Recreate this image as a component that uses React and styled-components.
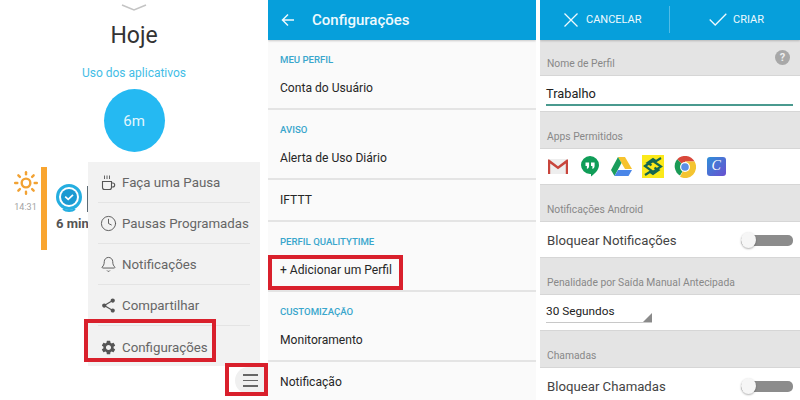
import React from 'react';
import styled, { createGlobalStyle } from 'styled-components';
import { Bell, Clock, Sun } from 'lucide-react';
import { MdSettings, MdShare } from 'react-icons/md';

const GlobalStyle = createGlobalStyle`
  html, body { margin: 0; padding: 0; background: #fff; }
  body { font-family: Roboto, "Noto Sans", sans-serif; }
  * { box-sizing: border-box; }
`;

const Page = styled.div`
  width: 800px;
  height: 400px;
  overflow: hidden;
  display: grid;
  grid-template-columns: 268px 268px 264px;
  background: #fff;
`;

const Screen = styled.section`
  position: relative;
  height: 400px;
  overflow: hidden;
  background: ${p => p.$bg || '#fff'};
  display: flex;
  flex-direction: column;
  &:last-child { margin-left: 4px; }
`;

/* ---- first screen ---- */
const Chevron = styled.svg`
  display: block;
  flex: none;
  align-self: center;
  margin-top: 4px;
  width: 26px;
  height: 8px;
`;

const Today = styled.h1`
  margin: 8px 0 0;
  height: 32px;
  line-height: 32px;
  font-size: 23px;
  font-weight: 400;
  color: #333;
  text-align: center;
`;

const UsageLabel = styled.div`
  margin-top: 13px;
  height: 16px;
  line-height: 16px;
  font-size: 12px;
  color: #43bde6;
  text-align: center;
`;

const UsageBubble = styled.div`
  align-self: center;
  flex: none;
  margin-top: 8px;
  width: 61px;
  height: 63px;
  border-radius: 50%;
  background: #25b9f2;
  color: #e3f6fd;
  font-size: 15px;
  display: flex;
  align-items: center;
  justify-content: center;
`;

const Timeline = styled.div`
  margin-top: 15px;
  height: 83px;
  display: flex;
`;

const TimeColumn = styled.div`
  width: 41px;
  padding: 3px 0 0 10px;
  display: flex;
  flex-direction: column;
  align-items: center;
  color: #f2a233;
`;

const TimeText = styled.span`
  margin-top: 6px;
  font-size: 9px;
  color: #a3a3a3;
`;

const OrangeBar = styled.div`
  width: 6px;
  height: 83px;
  background: #f9a530;
`;

const Entry = styled.div`
  margin-left: 9px;
  padding-top: 17px;
`;

const EntryTop = styled.div`
  display: flex;
  gap: 5px;
  align-items: flex-start;
`;

const EntryLine = styled.div`
  width: 1px;
  height: 26px;
  margin-top: 2px;
  background: #5d6b74;
`;

const EntryTime = styled.div`
  margin-top: 3px;
  font-size: 13px;
  font-weight: 700;
  color: #555;
  white-space: nowrap;
`;

const Menu = styled.nav`
  position: absolute;
  left: 88px;
  top: 162px;
  width: 172px;
  height: 204px;
  background: #f2f2f2;
`;

const MenuItem = styled.div`
  height: 41px;
  margin: 0 10px;
  padding: 1px 0 0 2px;
  display: flex;
  align-items: center;
  gap: 5px;
  font-size: 13.3px;
  color: #666;
  white-space: nowrap;
  border-bottom: ${p => (p.$last ? 'none' : '1px solid #e4e4e4')};
  svg { flex: none; width: 17px; height: 17px; color: #555; }
`;

const Fab = styled.div`
  position: absolute;
  left: 235px;
  top: 367px;
  width: 33px;
  height: 27px;
  border-radius: 14px 0 0 14px;
  background: #f0f0f0;
  display: flex;
  flex-direction: column;
  justify-content: center;
  gap: 4px;
  padding-left: 8px;
`;

const FabLine = styled.span`
  display: block;
  width: 15px;
  height: 1.5px;
  background: #666;
`;

const Highlight = styled.div`
  position: absolute;
  border: 4px solid #d9202c;
  pointer-events: none;
`;

const ConfigHighlight = styled(Highlight)`
  left: 84px;
  top: 319px;
  width: 132px;
  height: 43px;
`;

const FabHighlight = styled(Highlight)`
  left: 225px;
  top: 363px;
  width: 43px;
  height: 33px;
`;

const ProfileHighlight = styled(Highlight)`
  left: 0;
  top: 255px;
  width: 135px;
  height: 35px;
`;

/* ---- second screen ---- */
const AppBar = styled.header`
  flex: none;
  height: 40px;
  padding-bottom: 1px;
  background: #069fdb;
  color: #eef9fd;
  display: flex;
  align-items: center;
  box-shadow: 0 1px 2px rgba(0, 0, 0, 0.2);
  position: relative;
  z-index: 1;
`;

const BackArrow = styled.svg`
  width: 14px;
  height: 14px;
  margin-left: 13px;
`;

const AppTitle = styled.h2`
  margin: 0 0 0 17px;
  font-size: 15px;
  font-weight: 500;
`;

const SettingsBody = styled.div`
  flex: 1;
  background: #fafafa;
`;

const SectionLabel = styled.div`
  height: 28px;
  padding: 11px 12px 0;
  line-height: 18px;
  font-size: 9.6px;
  font-weight: 500;
  color: #39a6cc;
`;

const SettingRow = styled.div`
  height: 42px;
  padding: 0 12px;
  border-bottom: 2px solid #e4e4e4;
  display: flex;
  align-items: center;
  font-size: 12.1px;
  color: #262626;
`;

/* ---- third screen ---- */
const Action = styled.div`
  display: flex;
  align-items: center;
  width: ${p => p.$w}px;
  padding-left: ${p => p.$pad}px;
  gap: ${p => p.$gap}px;
  font-size: 11px;
  svg { flex: none; }
`;

const ActionDivider = styled.div`
  width: 1px;
  height: 27px;
  background: rgba(255, 255, 255, 0.3);
`;

const ProfileForm = styled.div`
  flex: 1;
  background: #e4e4e4;
`;

const Band = styled.div`
  height: ${p => p.$h || 36}px;
  padding: 0 10px 5px 7px;
  display: flex;
  align-items: flex-end;
  justify-content: space-between;
  font-size: 10.3px;
  line-height: 12px;
  color: #888;
`;

const HelpBadge = styled.span`
  width: 15px;
  height: 15px;
  margin-bottom: 5px;
  border-radius: 50%;
  background: #a8a8a8;
  color: #eee;
  font-size: 11px;
  font-weight: 700;
  line-height: 15px;
  text-align: center;
`;

const Card = styled.div`
  height: 37px;
  background: #fff;
  border-top: 1px solid #d6d6d6;
  border-bottom: 1px solid #d6d6d6;
  display: flex;
  align-items: center;
  position: relative;
`;

const NameField = styled.div`
  align-self: flex-start;
  width: 247px;
  height: 22px;
  margin: 8px 0 0 6px;
  border-bottom: 2px solid #4a9a8f;
  font-size: 12.8px;
  line-height: 20px;
  color: #222;
`;

const AppStrip = styled(Card)`
  padding-left: 2px;
`;

const AppCell = styled.div`
  width: 31.7px;
  display: flex;
  justify-content: center;
`;

const ToggleRow = styled(Card)`
  padding: 1px 7px 0;
  justify-content: space-between;
  font-size: 13.2px;
  color: #444;
`;

const Toggle = styled.div`
  position: relative;
  width: 52px;
  height: 11px;
  border-radius: 5px;
  background: #8c8c8c;
  &::before {
    content: "";
    position: absolute;
    left: 0;
    top: -3px;
    width: 15px;
    height: 16px;
    border-radius: 50%;
    background: #f6f6f6;
    box-shadow: 0 1px 2px rgba(0, 0, 0, 0.3);
  }
`;

const Select = styled.div`
  position: relative;
  width: 106px;
  height: 20px;
  margin: 0 0 0 6px;
  border-bottom: 1px solid #c8c8c8;
  font-size: 11.8px;
  line-height: 17px;
  color: #222;
  &::after {
    content: "";
    position: absolute;
    right: 0;
    bottom: 0;
    border-style: solid;
    border-width: 0 0 9px 9px;
    border-color: transparent transparent #8a8a8a transparent;
  }
`;

const GmailIcon = () => (
  <svg width="22" height="17" viewBox="0 0 22 17">
    <rect x="1" y="1" width="20" height="15" fill="#eeeeee" />
    <path d="M3.2 16V5.5L11 11.3l7.8-5.8V16H21V1.5h-1.2L11 8.3 2.2 1.5H1V16z" fill="#c8453c" />
  </svg>
);

const HangoutsIcon = () => (
  <svg width="18" height="21" viewBox="0 0 18 21">
    <path d="M9 0a9 9 0 0 1 9 9c0 5-4.5 9-8 11.5V18h-1A9 9 0 0 1 9 0z" fill="#109d58" />
    <path d="M4.5 6.5h3.6v3.6c0 1.6-.9 2.6-2.2 2.9v-2.9H4.5zM10 6.5h3.6v3.6c0 1.6-.9 2.6-2.2 2.9v-2.9H10z" fill="#fff" />
  </svg>
);

const DriveIcon = () => (
  <svg width="21" height="19" viewBox="0 0 21 19">
    <path d="M7 0h7l7 12h-7z" fill="#f7c32e" />
    <path d="M7 0l3.5 6L3.5 19 0 13z" fill="#1a9d5c" />
    <path d="M7 13h14l-3.5 6h-14z" fill="#4a86e8" />
  </svg>
);

const BancoIcon = () => (
  <svg width="22" height="23" viewBox="0 0 22 23">
    <rect width="22" height="23" fill="#fbe91a" />
    <g fill="none" stroke="#14664f" strokeWidth="2.2">
      <path d="M19 3l-5 3.2-3-2.2-5.5 4 4 2.4" />
      <path d="M3 20l5-3.2 3 2.2 5.5-4-4-2.4" />
      <path d="M3 11l8-5 8 5.5-8 5.5z" />
    </g>
  </svg>
);

const ChromeIcon = () => (
  <svg width="22" height="22" viewBox="0 0 22 22">
    <path d="M11 11L3.2 3.2A11 11 0 0 1 20.6 5.5H11z" fill="#d9483b" />
    <path d="M11 11l-5 8.6A11 11 0 0 1 3.2 3.2z" fill="#1a9a55" />
    <path d="M11 5.5h9.6A11 11 0 0 1 6 20.8L11 11z" fill="#f4c430" />
    <circle cx="11" cy="11" r="5" fill="#fff" />
    <circle cx="11" cy="11" r="3.8" fill="#5a8fe6" />
  </svg>
);

const CanvaTile = styled.div`
  width: 19px;
  height: 19px;
  border-radius: 3px;
  background: linear-gradient(135deg, #2f8fd8, #6a4fd0);
  color: #fff;
  font-family: "Liberation Serif", serif;
  font-style: italic;
  font-size: 14px;
  line-height: 18px;
  text-align: center;
`;

const CoffeeIcon = () => (
  <svg viewBox="0 0 17 17" fill="none" stroke="currentColor" strokeWidth="1.1">
    <path d="M2.5 7.5h9v6a2 2 0 0 1-2 2h-5a2 2 0 0 1-2-2z" />
    <path d="M11.5 9h1.2a2 2 0 0 1 0 4h-1.2" />
    <path d="M4.5 1.5V5M7 1.5V5M9.5 1.5V5" strokeWidth="0.9" />
  </svg>
);

const AppClockIcon = () => (
  <svg width="26" height="29" viewBox="0 0 26 29">
    <circle cx="13" cy="13" r="11.5" fill="#fff" stroke="#25aee0" strokeWidth="3" />
    <circle cx="13" cy="13" r="8" fill="#1b9ad2" />
    <path d="M9.2 12.6l3 2.8 4.8-4.6" fill="none" stroke="#fff" strokeWidth="1.7" />
    <path d="M7 25c3 2.5 9 2.8 12 0" fill="none" stroke="#25aee0" strokeWidth="2" />
  </svg>
);

const menuItems = [
  { label: 'Faça uma Pausa', icon: <CoffeeIcon /> },
  { label: 'Pausas Programadas', icon: <Clock strokeWidth={1.3} /> },
  { label: 'Notificações', icon: <Bell strokeWidth={1.3} /> },
  { label: 'Compartilhar', icon: <MdShare /> },
  { label: 'Configurações', icon: <MdSettings />, last: true },
];

const App = () => (
  <>
    <GlobalStyle />
    <Page>
      <Screen>
        <Chevron viewBox="0 0 26 8">
          <path d="M1 1l12 5 12-5" fill="none" stroke="#c4c4c4" strokeWidth="1.6" />
        </Chevron>
        <Today>Hoje</Today>
        <UsageLabel>Uso dos aplicativos</UsageLabel>
        <UsageBubble>6m</UsageBubble>
        <Timeline>
          <TimeColumn>
            <Sun size={26} strokeWidth={2.2} />
            <TimeText>14:31</TimeText>
          </TimeColumn>
          <OrangeBar />
          <Entry>
            <EntryTop>
              <AppClockIcon />
              <EntryLine />
            </EntryTop>
            <EntryTime>6 min</EntryTime>
          </Entry>
        </Timeline>
        <Menu>
          {menuItems.map(item => (
            <MenuItem key={item.label} $last={item.last}>
              {item.icon}
              {item.label}
            </MenuItem>
          ))}
        </Menu>
        <Fab>
          <FabLine />
          <FabLine />
          <FabLine />
        </Fab>
        <ConfigHighlight />
        <FabHighlight />
      </Screen>

      <Screen $bg="#fafafa">
        <AppBar>
          <BackArrow viewBox="0 0 14 14">
            <path d="M13 7H1.5M7 1.5L1.5 7 7 12.5" fill="none" stroke="#eef9fd" strokeWidth="1.5" />
          </BackArrow>
          <AppTitle>Configurações</AppTitle>
        </AppBar>
        <SettingsBody>
          <SectionLabel>MEU PERFIL</SectionLabel>
          <SettingRow>Conta do Usuário</SettingRow>
          <SectionLabel>AVISO</SectionLabel>
          <SettingRow>Alerta de Uso Diário</SettingRow>
          <SettingRow>IFTTT</SettingRow>
          <SectionLabel>PERFIL QUALITYTIME</SectionLabel>
          <SettingRow>+ Adicionar um Perfil</SettingRow>
          <SectionLabel>CUSTOMIZAÇÃO</SectionLabel>
          <SettingRow>Monitoramento</SettingRow>
          <SettingRow>Notificação</SettingRow>
        </SettingsBody>
        <ProfileHighlight />
      </Screen>

      <Screen $bg="#e4e4e4">
        <AppBar>
          <Action $w={129} $pad={24} $gap={8}>
            <svg width="14" height="14" viewBox="0 0 14 14">
              <path d="M0.5 0.5l13 13M13.5 0.5l-13 13" stroke="#eef9fd" strokeWidth="1.3" fill="none" />
            </svg>
            CANCELAR
          </Action>
          <ActionDivider />
          <Action $w={130} $pad={39} $gap={6}>
            <svg width="18" height="13" viewBox="0 0 18 13">
              <path d="M0.7 6.5l5.5 5.5L17.3 0.7" stroke="#eef9fd" strokeWidth="1.3" fill="none" />
            </svg>
            CRIAR
          </Action>
        </AppBar>
        <ProfileForm>
          <Band $h={35}>
            Nome de Perfil
            <HelpBadge>?</HelpBadge>
          </Band>
          <Card>
            <NameField>Trabalho</NameField>
          </Card>
          <Band>Apps Permitidos</Band>
          <AppStrip>
            <AppCell><GmailIcon /></AppCell>
            <AppCell><HangoutsIcon /></AppCell>
            <AppCell><DriveIcon /></AppCell>
            <AppCell><BancoIcon /></AppCell>
            <AppCell><ChromeIcon /></AppCell>
            <AppCell><CanvaTile>C</CanvaTile></AppCell>
          </AppStrip>
          <Band>Notificações Android</Band>
          <ToggleRow>
            Bloquear Notificações
            <Toggle />
          </ToggleRow>
          <Band>Penalidade por Saída Manual Antecipada</Band>
          <Card>
            <Select>30 Segundos</Select>
          </Card>
          <Band>Chamadas</Band>
          <ToggleRow>
            Bloquear Chamadas
            <Toggle />
          </ToggleRow>
        </ProfileForm>
      </Screen>
    </Page>
  </>
);

export default App;
